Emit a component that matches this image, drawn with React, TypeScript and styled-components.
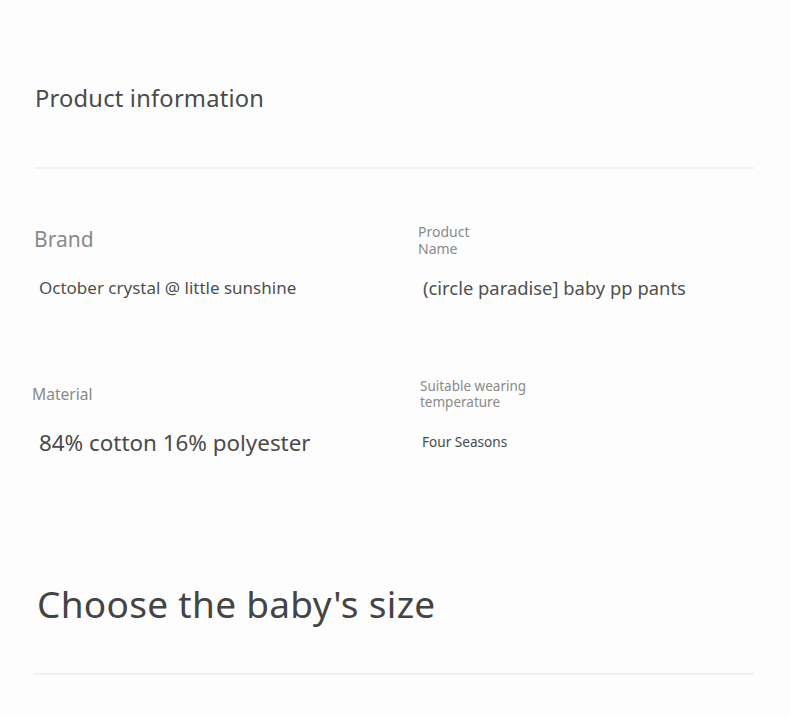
import React from "react";
import styled, { createGlobalStyle } from "styled-components";

const Global = createGlobalStyle`
  html, body { margin: 0; padding: 0; background: #fdfdfd; }
  body { font-family: "Noto Sans", "Open Sans", sans-serif; color: #444; }
`;

const Page = styled.div`
  width: 790px;
  height: 716px;
  box-sizing: border-box;
  padding: 0 36px 0 34px;
  display: flex;
  flex-direction: column;
  overflow: hidden;
`;

const SectionTitle = styled.h2`
  margin: 0;
  padding: 81px 0 0 1px;
  font-size: 23.7px;
  font-weight: 400;
  line-height: 34px;
  color: #4a4a4a;
  letter-spacing: 0.2px;
`;

const Divider = styled.div<{ $top: number }>`
  height: 2px;
  background: #f1f1ef;
  margin-top: ${(p) => p.$top}px;
  flex-shrink: 0;
`;

const Grid = styled.div`
  display: grid;
  grid-template-columns: 384px 1fr;
`;

const Cell = styled.div<{ $dx: number; $top: number; $h: number }>`
  margin-left: ${(p) => p.$dx}px;
  padding-top: ${(p) => p.$top}px;
  height: ${(p) => p.$h}px;
  box-sizing: border-box;
  display: flex;
  flex-direction: column;
`;

const Label = styled.div<{ $size: number; $lh: number; $w?: number }>`
  font-size: ${(p) => p.$size}px;
  line-height: ${(p) => p.$lh}px;
  color: #8a8a8a;
  width: ${(p) => (p.$w ? `${p.$w}px` : "auto")};
`;

const Value = styled.div<{ $size: number; $gap: number; $dx: number; $color?: string }>`
  font-size: ${(p) => p.$size}px;
  line-height: 1.3;
  margin-top: ${(p) => p.$gap}px;
  padding-left: ${(p) => p.$dx}px;
  color: ${(p) => p.$color || "#505050"};
`;

const BigTitle = styled.h2`
  margin: 0;
  padding: 0 0 0 3px;
  margin-top: 80px;
  font-size: 37px;
  font-weight: 400;
  line-height: 50px;
  color: #444;
  letter-spacing: 0.3px;
`;

export default function App() {
  return (
    <>
      <Global />
      <Page>
        <SectionTitle>Product information</SectionTitle>
        <Divider $top={52} />
        <Grid>
          <Cell $dx={0} $top={55} $h={200}>
            <Label $size={21} $lh={30}>Brand</Label>
            <Value $size={17} $gap={23} $dx={5}>October crystal @ little sunshine</Value>
          </Cell>
          <Cell $dx={0} $top={54} $h={200}>
            <Label $size={14} $lh={17} $w={80}>Product Name</Label>
            <Value $size={18.4} $gap={19} $dx={5}>(circle paradise] baby pp pants</Value>
          </Cell>
          <Cell $dx={-2} $top={14} $h={130}>
            <Label $size={15.6} $lh={22}>Material</Label>
            <Value $size={22.4} $gap={23} $dx={7} $color="#4a4a4a">84% cotton 16% polyester</Value>
          </Cell>
          <Cell $dx={2} $top={9} $h={130}>
            <Label $size={13.5} $lh={16} $w={140}>Suitable wearing temperature</Label>
            <Value $size={13.6} $gap={23} $dx={2} $color="#4a4a4a">Four Seasons</Value>
          </Cell>
        </Grid>
        <BigTitle>Choose the baby's size</BigTitle>
        <Divider $top={44} />
      </Page>
    </>
  );
}
